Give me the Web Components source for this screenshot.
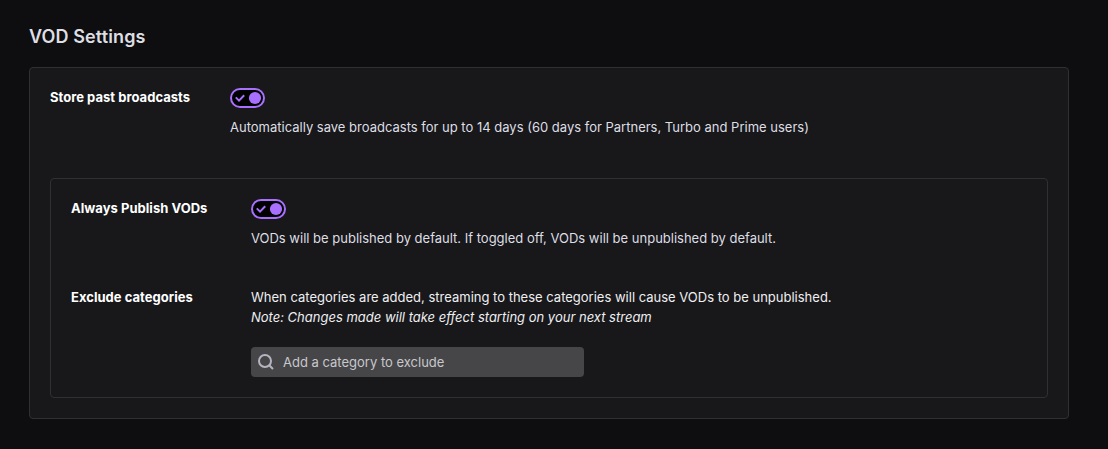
<!DOCTYPE html>
<html lang="en"><head><meta charset="utf-8"><title>VOD Settings</title>
<style>body{margin:0;background:#0e0e10;font:13px/20px Inter,sans-serif;color:#efeff1;height:449px;overflow:hidden}</style></head>
<body><vod-settings></vod-settings>
<script>
const define=(name,html)=>{const t=document.createElement('template');t.innerHTML=html;
customElements.define(name,class extends HTMLElement{constructor(){super();this.attachShadow({mode:'open'}).append(t.content.cloneNode(true));}});};
define('toggle-switch',`<style>:host{display:block;width:35px;height:20px}svg{display:block}</style>
<svg width="35" height="20" viewBox="0 0 35 20"><rect x="1" y="1" width="33" height="18" rx="9" fill="#000" stroke="#a970ff" stroke-width="2"/><path d="M5.8 9.4L9 12.6l5.2-5.4" fill="none" stroke="#a970ff" stroke-width="2"/><circle cx="25" cy="10" r="6.1" fill="#a970ff"/></svg>`);
define('setting-row',`<style>:host{display:flex}.label{width:180px;flex:none;font-weight:700;color:#fff;letter-spacing:.03px;line-height:var(--label-line,18px)}.body{flex:1}</style><div class="label"><slot name="label"></slot></div><div class="body"><slot></slot></div>`);
define('settings-panel',`<style>:host{display:block;box-sizing:border-box;background:#18181b;border:1px solid #303032;border-radius:4px;padding:20px}</style><slot></slot>`);
define('category-search',`<style>:host{display:flex;align-items:center;box-sizing:border-box;width:333px;height:30px;margin-top:20px;border-radius:4px;background:#464649;color:#c8c8cc;padding-left:5px;gap:7px}svg{flex:none}</style>
<svg width="20" height="20" viewBox="0 0 20 20" fill="none" stroke="#b5b5bf" stroke-width="2"><circle cx="9" cy="9" r="6"/><path d="M13.2 13.2L17 17"/></svg><span><slot></slot></span>`);
define('vod-settings',`<style>:host{display:block;padding:26px 39px 0 29px}h1{font-size:18px;line-height:22px;font-weight:600;letter-spacing:.12px;color:#dedee3;margin:0 0 19px}p{margin:0}.outer{height:352px}.inner{height:220px;margin-top:41px}.hint{margin-top:9px;color:#dedee3}.exclude{margin-top:39px;--label-line:20px}</style>
<h1>VOD Settings</h1><settings-panel class="outer">
<setting-row><span slot="label">Store past broadcasts</span><toggle-switch></toggle-switch><p class="hint">Automatically save broadcasts for up to 14 days (60 days for Partners, Turbo and Prime users)</p></setting-row>
<settings-panel class="inner"><setting-row><span slot="label">Always Publish VODs</span><toggle-switch></toggle-switch><p class="hint">VODs will be published by default. If toggled off, VODs will be unpublished by default.</p></setting-row>
<setting-row class="exclude"><span slot="label">Exclude categories</span><p>When categories are added, streaming to these categories will cause VODs to be unpublished.</p><p><em>Note: Changes made will take effect starting on your next stream</em></p><category-search>Add a category to exclude</category-search></setting-row></settings-panel></settings-panel>`);
</script></body></html>
